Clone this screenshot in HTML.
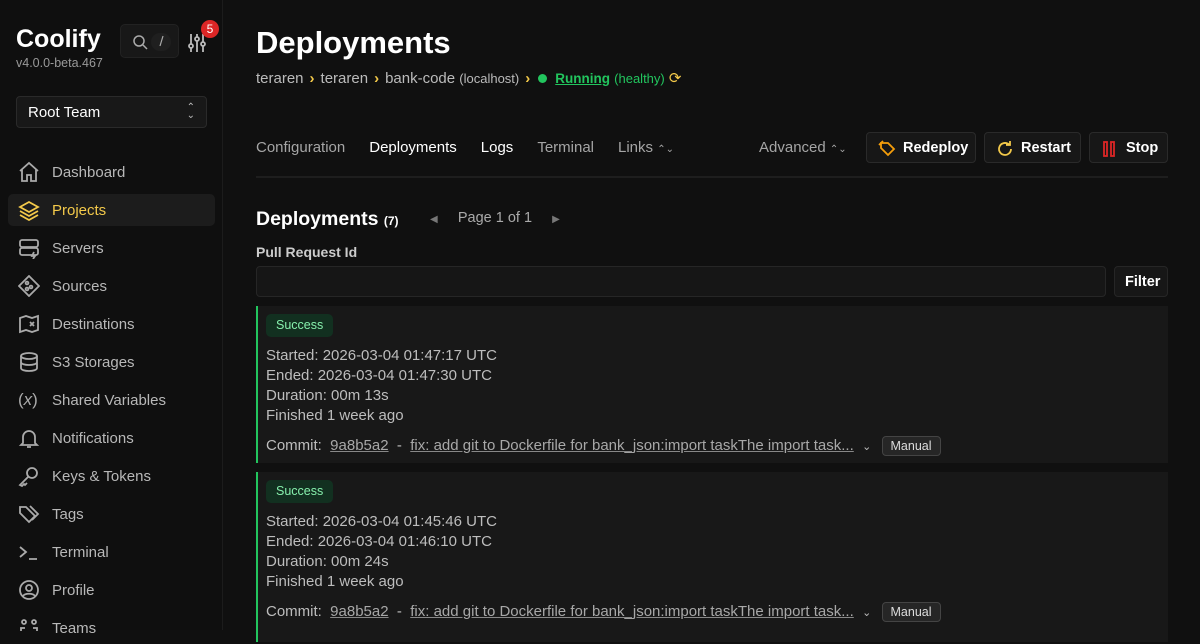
<!DOCTYPE html>
<html><head><meta charset="utf-8"><style>
*{box-sizing:border-box;margin:0;padding:0}
body{width:1200px;height:630px;overflow:hidden;background:#101010;font-family:"Liberation Sans",sans-serif;color:#e5e5e5;position:relative}
.side{position:absolute;left:0;top:0;width:223px;height:630px;border-right:1px solid #1c1c1c;background:#0f0f0f}
.logo{position:absolute;left:16px;top:25px;font-size:25px;font-weight:bold;color:#fff}
.ver{position:absolute;left:16px;top:56px;font-size:12.5px;color:#9a9a9a}
.search{position:absolute;left:120px;top:24px;width:59px;height:34px;background:#181818;border-radius:5px;border:1px solid #222}
.badge{position:absolute;left:201px;top:20px;width:18px;height:18px;border-radius:50%;background:#dc2626;color:#fff;font-size:12px;text-align:center;line-height:18px}
.team{position:absolute;left:16px;top:96px;width:191px;height:32px;border:1px solid #2a2a2a;border-radius:4px;background:#181818;font-size:15px;color:#fff;padding:7px 11px}
.nav{position:absolute;left:8px;width:207px;height:32px;border-radius:5px;font-size:15px;color:#b8b8b8;padding:8px 0 0 44px}
.nav svg{position:absolute;left:10px;top:5px}
.nav.act{background:#1c1c1c;color:#f3c94a}
.main{position:absolute;left:256px;top:0;width:912px}
h1{position:absolute;top:25px;font-size:31px;color:#fff;font-weight:bold}
.crumb{position:absolute;top:69px;font-size:15px;color:#bbb;white-space:nowrap}
.crumb .y{color:#f3c94a;font-weight:bold;margin:0 6px}
.tabs{position:absolute;top:139px;font-size:15px;color:#a5a5a5;white-space:nowrap}
.btn{position:absolute;top:132px;height:31px;border:1px solid #2a2a2a;background:#171717;border-radius:4px;font-size:14.5px;color:#fff;font-weight:bold;padding:7px 10px 0 36px}
.btn svg{position:absolute;left:10px;top:6px}
.hr{position:absolute;top:176px;left:0;width:912px;height:2px;background:#1e1e1e}
.card{position:absolute;left:0;width:912px;background:#181818;border-left:2px solid #22c55e}
.succ{position:absolute;left:8px;top:8px;height:23px;padding:4px 10px;background:#123020;color:#86efac;font-size:12.5px;border-radius:5px}
.lines{position:absolute;left:8px;top:40px;font-size:15px;color:#bdbdbd;line-height:20px}
.commit{position:absolute;left:8px;top:130px;font-size:15px;color:#bdbdbd;white-space:nowrap}
.commit u{color:#a8a8a8;text-decoration-color:#888}
.man{display:inline-block;border:1px solid #444;border-radius:4px;background:#262626;font-size:12.5px;color:#ddd;padding:2px 8px;margin-left:6px}
</style></head><body>
<div class="side">
<div class="logo">Coolify</div><div class="ver">v4.0.0-beta.467</div>
<div class="search"><svg width="59" height="34"><circle cx="18" cy="16" r="5" fill="none" stroke="#aaa" stroke-width="1.5"/><path d="M22 20l4 4" stroke="#aaa" stroke-width="1.5"/><rect x="30" y="8" width="20" height="18" rx="9" fill="#1f1f1f"/><path d="M42 11l-3 10" stroke="#aaa" stroke-width="1.2"/></svg></div>
<svg style="position:absolute;left:187px;top:32px" width="20" height="22" fill="none" stroke="#bbb" stroke-width="1.8"><path d="M4 2v18M10 2v18M16 2v18"/><circle cx="4" cy="14" r="2" fill="#0f0f0f"/><circle cx="10" cy="7" r="2" fill="#0f0f0f"/><circle cx="16" cy="12" r="2" fill="#0f0f0f"/></svg>
<div class="badge">5</div>
<div class="team">Root Team<span style="position:absolute;right:11px;top:7px;font-size:10px;color:#bbb;line-height:8px">⌃<br>⌄</span></div>
<div class="nav" style="top:156px"><svg width="22" height="22" fill="none" stroke="#aaa" stroke-width="1.8"><path d="M2 10L11 2l9 8M4 8v12h5v-6h4v6h5V8"/></svg>Dashboard</div>
<div class="nav act" style="top:194px"><svg width="22" height="22" fill="none" stroke="#f3c94a" stroke-width="1.8"><path d="M11 3L2 8l9 5 9-5zM2 12l9 5 9-5M2 16l9 5 9-5"/></svg>Projects</div>
<div class="nav" style="top:232px"><svg width="22" height="22" fill="none" stroke="#aaa" stroke-width="1.8"><rect x="2" y="3" width="18" height="7" rx="2"/><rect x="2" y="11" width="18" height="7" rx="2"/><path d="M16 15l-2 4h3l-2 3"/></svg>Servers</div>
<div class="nav" style="top:270px"><svg width="22" height="22" fill="none" stroke="#aaa" stroke-width="1.8"><path d="M11 1l10 10-10 10L1 11z"/><circle cx="9" cy="8" r="1.4"/><circle cx="9" cy="14" r="1.4"/><circle cx="13" cy="12" r="1.4"/></svg>Sources</div>
<div class="nav" style="top:308px"><svg width="22" height="22" fill="none" stroke="#aaa" stroke-width="1.8"><path d="M2 5l6-2 6 2 6-2v14l-6 2-6-2-6 2z"/><path d="M12 9l4 4M16 9l-4 4"/></svg>Destinations</div>
<div class="nav" style="top:346px"><svg width="22" height="22" fill="none" stroke="#aaa" stroke-width="1.8"><ellipse cx="11" cy="5" rx="8" ry="3"/><path d="M3 5v12c0 2 4 3 8 3s8-1 8-3V5M3 11c0 2 4 3 8 3s8-1 8-3"/></svg>S3 Storages</div>
<div class="nav" style="top:384px"><span style="position:absolute;left:10px;top:6px;color:#aaa;font-size:17px">(<i>x</i>)</span>Shared Variables</div>
<div class="nav" style="top:422px"><svg width="22" height="22" fill="none" stroke="#aaa" stroke-width="1.8"><path d="M5 16V10a6 6 0 0112 0v6l2 2H3zM9 20h4"/></svg>Notifications</div>
<div class="nav" style="top:460px"><svg width="22" height="22" fill="none" stroke="#aaa" stroke-width="1.8"><circle cx="14" cy="8" r="5"/><path d="M10 12l-8 8 2 1 2-2 1 1 2-2"/></svg>Keys &amp; Tokens</div>
<div class="nav" style="top:498px"><svg width="22" height="22" fill="none" stroke="#aaa" stroke-width="1.8"><path d="M2 4v6l9 9 6-6-9-9zM12 3l8 8-6 6"/></svg>Tags</div>
<div class="nav" style="top:536px"><svg width="22" height="22" fill="none" stroke="#aaa" stroke-width="1.8"><path d="M2 6l6 5-6 5M11 18h8"/></svg>Terminal</div>
<div class="nav" style="top:574px"><svg width="22" height="22" fill="none" stroke="#aaa" stroke-width="1.8"><circle cx="11" cy="11" r="9"/><circle cx="11" cy="9" r="3"/><path d="M5 17c2-3 10-3 12 0"/></svg>Profile</div>
<div class="nav" style="top:612px"><svg width="22" height="22" fill="none" stroke="#aaa" stroke-width="1.8"><circle cx="6" cy="5" r="2"/><circle cx="16" cy="5" r="2"/><path d="M3 14v-3h4M19 14v-3h-4"/></svg>Teams</div>
</div>
<div class="main">
<h1>Deployments</h1>
<div class="crumb">teraren<span class="y">›</span>teraren<span class="y">›</span>bank-code <span style="font-size:13px">(localhost)</span><span class="y">›</span><span style="display:inline-block;width:9px;height:9px;border-radius:50%;background:#22c55e;margin:0 8px 0 2px"></span><u style="color:#22c55e;font-weight:bold;font-size:13.5px">Running</u> <span style="color:#22c55e;font-size:13px">(healthy)</span> <span style="color:#f3c94a">⟳</span></div>
<div class="tabs"><span style="margin-right:24px">Configuration</span><span style="color:#fff;margin-right:24px">Deployments</span><span style="color:#fff;margin-right:24px">Logs</span><span style="margin-right:24px">Terminal</span>Links <span style="font-size:10px">⌃⌄</span></div>
<div class="tabs" style="left:503px">Advanced <span style="font-size:10px">⌃⌄</span></div>
<div class="btn" style="left:610px;width:110px"><svg width="20" height="20" fill="none" stroke="#f59e0b" stroke-width="1.8"><path d="M4 4h7l6 6-6 6-7-7z"/><path d="M2 6l4-4"/></svg>Redeploy</div>
<div class="btn" style="left:728px;width:97px"><svg width="20" height="20" fill="none" stroke="#f3c94a" stroke-width="1.8"><path d="M16 10a6 6 0 11-2-4.5M15 2v4h-4"/></svg>Restart</div>
<div class="btn" style="left:833px;width:79px"><svg width="20" height="20" fill="none" stroke="#dc2626" stroke-width="1.8"><rect x="4" y="3" width="3" height="14"/><rect x="11" y="3" width="3" height="14"/></svg>Stop</div>
<div class="hr"></div>
<div style="position:absolute;top:208px;font-size:19.5px;font-weight:bold;color:#fff">Deployments <span style="font-size:12px">(7)</span></div>
<div style="position:absolute;top:210px;left:174px;font-size:14.5px;color:#aaa;white-space:nowrap"><span style="font-size:10px;color:#777">◀</span>&nbsp;&nbsp;&nbsp;&nbsp;&nbsp;Page 1 of 1&nbsp;&nbsp;&nbsp;&nbsp;&nbsp;<span style="font-size:10px;color:#777">▶</span></div>
<div style="position:absolute;top:244px;font-size:14px;color:#ccc;font-weight:bold">Pull Request Id</div>
<div style="position:absolute;top:266px;left:0;width:850px;height:31px;border:1px solid #262626;background:#161616;border-radius:4px"></div>
<div style="position:absolute;top:266px;left:858px;width:54px;height:31px;border:1px solid #262626;background:#171717;border-radius:4px;font-size:14.5px;font-weight:bold;color:#fff;padding:7px 0 0 10px">Filter</div>
<div class="card" style="top:306px;height:157px"><div class="succ">Success</div><div class="lines">Started: 2026-03-04 01:47:17 UTC<br>Ended: 2026-03-04 01:47:30 UTC<br>Duration: 00m 13s<br>Finished 1 week ago</div><div class="commit">Commit:&nbsp; <u>9a8b5a2</u>&nbsp; -&nbsp; <u>fix: add git to Dockerfile for bank_json:import taskThe import task...</u>&nbsp; <span style="font-size:11px">⌄</span> <span class="man">Manual</span></div></div>
<div class="card" style="top:472px;height:170px"><div class="succ">Success</div><div class="lines">Started: 2026-03-04 01:45:46 UTC<br>Ended: 2026-03-04 01:46:10 UTC<br>Duration: 00m 24s<br>Finished 1 week ago</div><div class="commit">Commit:&nbsp; <u>9a8b5a2</u>&nbsp; -&nbsp; <u>fix: add git to Dockerfile for bank_json:import taskThe import task...</u>&nbsp; <span style="font-size:11px">⌄</span> <span class="man">Manual</span></div></div>
</div>
</body></html>
